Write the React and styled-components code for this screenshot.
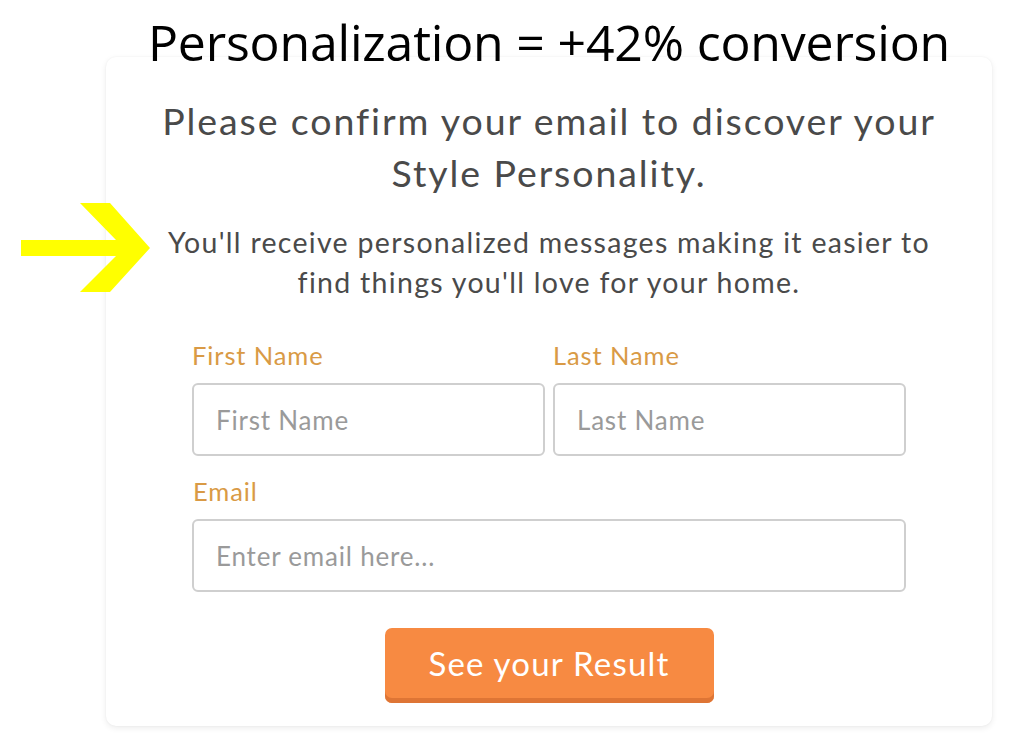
import React from "react";
import styled, { createGlobalStyle } from "styled-components";

const Global = createGlobalStyle`
  html, body { margin: 0; padding: 0; background: #fff; }
  body { font-family: "Lato", "Open Sans", sans-serif; }
  * { box-sizing: border-box; }
`;

const Page = styled.div`
  position: relative;
  width: 1024px;
  height: 753px;
  overflow: hidden;
  padding: 0 32px 0 106px;
  display: flex;
  flex-direction: column;
`;

const Headline = styled.h1`
  margin: 0;
  height: 57px;
  position: relative;
  z-index: 2;
  font-family: "Open Sans", sans-serif;
  font-weight: 400;
  font-size: 50px;
  line-height: 84px;
  letter-spacing: -0.2px;
  color: #000;
  text-align: center;
  white-space: nowrap;
`;

const Card = styled.div`
  width: 886px;
  height: 669px;
  background: #fff;
  border-radius: 10px;
  box-shadow: 0 2px 6px rgba(0, 0, 0, 0.08), 0 0 2px rgba(0, 0, 0, 0.05);
  display: flex;
  flex-direction: column;
  align-items: center;
  padding-top: 38px;
`;

const Lead = styled.p`
  margin: 0;
  font-family: "Lato", sans-serif;
  font-size: 37.5px;
  line-height: 52px;
  letter-spacing: 1.9px;
  color: #4a4a4a;
  text-align: center;
  width: 860px;
  white-space: nowrap;
`;

const Sub = styled.p`
  margin: 23px 0 0;
  font-family: "Lato", sans-serif;
  font-size: 28.5px;
  line-height: 40px;
  letter-spacing: 1.3px;
  color: #4a4a4a;
  text-align: center;
  width: 860px;
  white-space: nowrap;
`;

const Form = styled.form`
  width: 714px;
  margin-top: 38px;
  display: flex;
  flex-direction: column;
`;

const Row = styled.div`
  display: grid;
  grid-template-columns: ${(p) => p.$cols || "1fr"};
  column-gap: 8px;
  margin-top: ${(p) => p.$mt || 0}px;
`;

const Field = styled.div`
  display: flex;
  flex-direction: column;
`;

const Label = styled.label`
  font-family: "Lato", sans-serif;
  font-size: 25.5px;
  line-height: 30px;
  letter-spacing: 0.9px;
  color: #d99a45;
  margin-bottom: 13px;
  padding-left: ${(p) => p.$indent || 0}px;
`;

const Input = styled.input`
  height: 73px;
  width: 100%;
  border: 2px solid #cfcfcf;
  border-radius: 6px;
  padding: 0 22px;
  font-family: "Lato", sans-serif;
  font-size: 26px;
  letter-spacing: 0.8px;
  color: #333;
  background: #fff;
  outline: none;
  &::placeholder { color: #9a9a9a; }
`;

const ButtonWrap = styled.div`
  display: flex;
  justify-content: center;
  margin-top: 36px;
`;

const Button = styled.button`
  width: 329px;
  height: 75px;
  border: none;
  border-radius: 7px;
  background: #f78a42;
  box-shadow: inset 0 -5px 0 #de7535;
  color: #fff;
  font-family: "Lato", sans-serif;
  font-size: 33px;
  letter-spacing: 1.2px;
  padding-bottom: 6px;
  cursor: pointer;
`;

const Arrow = styled.svg`
  position: absolute;
  left: 20px;
  top: 202px;
  z-index: 3;
`;

export default function App() {
  return (
    <>
      <Global />
      <Page>
        <Headline>Personalization = +42% conversion</Headline>
        <Card>
          <Lead>
            Please confirm your email to discover your
            <br />
            Style Personality.
          </Lead>
          <Sub>
            You'll receive personalized messages making it easier to
            <br />
            find things you'll love for your home.
          </Sub>
          <Form onSubmit={(e) => e.preventDefault()}>
            <Row $cols="1fr 1fr">
              <Field>
                <Label>First Name</Label>
                <Input placeholder="First Name" />
              </Field>
              <Field>
                <Label>Last Name</Label>
                <Input placeholder="Last Name" />
              </Field>
            </Row>
            <Row $mt={20}>
              <Field>
                <Label $indent={1}>Email</Label>
                <Input placeholder="Enter email here..." />
              </Field>
            </Row>
            <ButtonWrap>
              <Button type="submit">See your Result</Button>
            </ButtonWrap>
          </Form>
        </Card>
        <Arrow width="132" height="92" viewBox="0 0 132 92">
          <polygon
            fill="#ffff00"
            points="1,38 96,38 60,1 90,1 130,46 90,90 60,90 96,54 1,54"
          />
        </Arrow>
      </Page>
    </>
  );
}
